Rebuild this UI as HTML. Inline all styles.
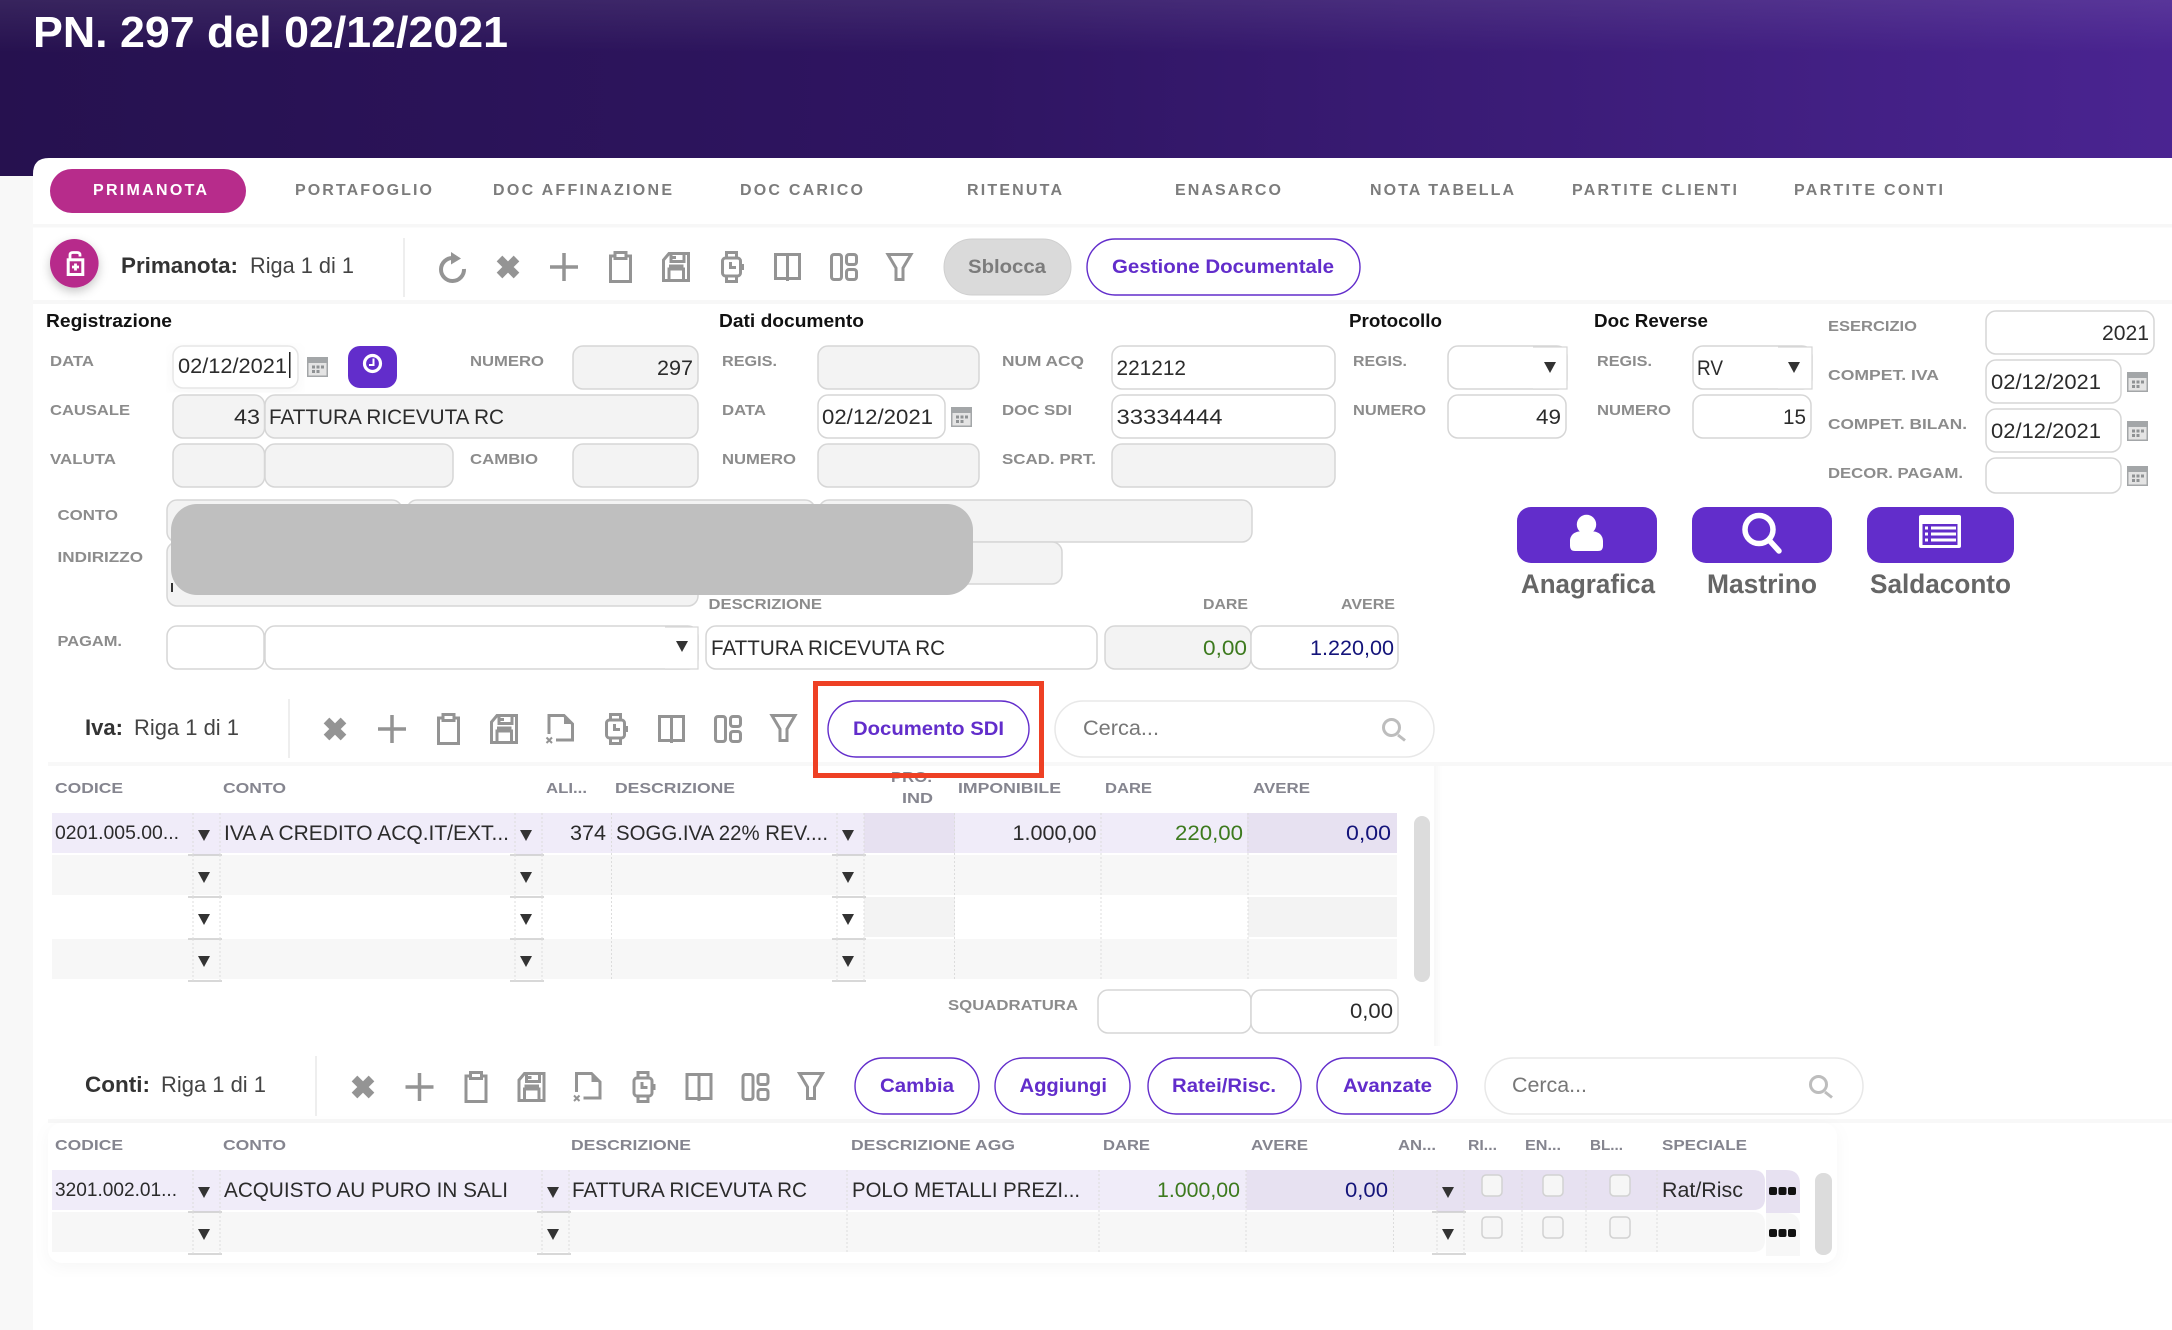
<!DOCTYPE html>
<html><head><meta charset="utf-8"><title>PN. 297 del 02/12/2021</title>
<style>
html,body{margin:0;padding:0;background:#fff;width:2172px;height:1330px;overflow:hidden}
svg{display:block;font-family:"Liberation Sans",Arial,sans-serif}
.t{font-size:16px;font-weight:bold;fill:#7c7c7c}
.l{font-size:15px;font-weight:bold;fill:#8c8c8c}
.h{font-size:15px;font-weight:bold;fill:#85858f}
.v{font-size:21px;fill:#2b2b2b}
.s{font-size:19px;fill:#2b2b2b}
.b{font-size:18px;font-weight:bold;fill:#111}
.p{font-size:19px;font-weight:bold;fill:#622dcb}
.n{font-size:22px;fill:#444}
.m{font-size:22px;font-weight:bold;fill:#333}
.c{font-size:21px;fill:#777}
.a{font-size:27px;font-weight:bold;fill:#666}
.g{fill:#3d7a1e}.y{fill:#14147a}
.d{fill:#f3f3f3;stroke:#d6d6d6;stroke-width:1.5}
.w{fill:#fff;stroke:#d6d6d6;stroke-width:1.5}
.o{fill:#fff;stroke:#622dcb;stroke-width:1.4}
.q{fill:#fff;stroke:#e8e8e8;stroke-width:1.5}
.i{fill:none;stroke:#949494;stroke-width:3}
.z{stroke:#dcdcdc;stroke-width:1;stroke-dasharray:2 2;fill:none}
</style></head><body>
<svg width="2172" height="1330" viewBox="0 0 2172 1330" xmlns="http://www.w3.org/2000/svg">
<defs>
<linearGradient id="hd" x1="0" x2="1" y1="0" y2="0"><stop offset="0" stop-color="#26114f"/><stop offset=".45" stop-color="#2f1562"/><stop offset="1" stop-color="#4a2491"/></linearGradient>
<linearGradient id="ht" x1="0" x2="0" y1="0" y2="1"><stop offset="0" stop-color="#fff" stop-opacity=".08"/><stop offset=".3" stop-color="#fff" stop-opacity="0"/></linearGradient>
<linearGradient id="ss" x1="0" x2="1" y1="0" y2="0"><stop offset="0" stop-color="#f7f7f7"/><stop offset="1" stop-color="#fff"/></linearGradient>
<filter id="sh" x="-40%" y="-40%" width="180%" height="180%"><feDropShadow dx="0" dy="4" stdDeviation="5" flood-color="#000" flood-opacity=".22"/></filter>
<filter id="cs" x="-5%" y="-5%" width="110%" height="115%"><feDropShadow dx="0" dy="4" stdDeviation="8" flood-color="#000" flood-opacity=".035"/></filter>
<g id="ix"><path d="M3.500 3.500L20.500 20.500M20.500 3.500L3.500 20.500" fill="none" stroke="#949494" stroke-width="8"/></g>
<g id="ipl"><path d="M0 14H28M14 0V28" fill="none" stroke="#949494" stroke-width="3.500"/></g>
<g id="icl"><path class="i" d="M6 5H1.500V30.500H21.500V5H17"/><rect class="i" x="6" y="1.500" width="11" height="6"/></g>
<g id="ifl"><path class="i" d="M7 1.500H26.500V28.500H1.500V8Z"/><path class="i" d="M7 28V17H21.500V28"/><path class="i" d="M7 14H21.500"/><path class="i" d="M9 1.500V9.500H22V1.500" stroke-width="2.500"/><rect x="10" y="4" width="4" height="3" fill="#949494"/></g>
<g id="iwa"><rect class="i" x="1.500" y="7" width="18" height="18" rx="3"/><path class="i" d="M5.500 7V1.500H15.500V7M5.500 25V30.500H15.500V25"/><rect x="20" y="13" width="3" height="6" fill="#949494"/><path class="i" d="M9.500 11V16.500H15"/></g>
<g id="ibo"><rect class="i" x="1.500" y="1.500" width="24" height="24"/><path class="i" d="M13.500 1.500V28"/></g>
<g id="ida"><rect class="i" x="1.500" y="1.500" width="10" height="25" rx="2.500"/><rect class="i" x="16.500" y="1.500" width="10" height="10" rx="2.500"/><rect class="i" x="16.500" y="16.500" width="10" height="10" rx="2.500"/></g>
<g id="ifi"><path class="i" d="M2 1.500H25L17 15V26.500H10V15Z"/></g>
<g id="idx"><path class="i" d="M3 20V1.500H18L26.500 10V26H10"/><path d="M18 1.500V10H26.500Z" fill="#949494"/><path d="M0.500 23.500L6 29M6 23.500L0.500 29" fill="none" stroke="#949494" stroke-width="2"/></g>
<g id="cal"><rect width="21" height="20" fill="#a3a6a8"/><rect x="1.500" y="6" width="18" height="12.500" fill="#e4e4e4"/><path d="M5 8.500h3v3h-3zM9.500 8.500h3v3h-3zM14 8.500h3v3h-3zM5 13h3v3h-3zM9.500 13h3v3h-3z" fill="#8f9294"/></g>
<g id="se"><path d="M-6 17H6L0 28Z" fill="#333"/><path d="M-16 42H18" stroke="#ccc" stroke-width="1.500"/><path class="z" d="M-11 0V42M16 0V42"/></g>
<g id="sr"><circle cx="9.500" cy="9.500" r="8" fill="none" stroke="#bdbdbd" stroke-width="3"/><path d="M16 17L23 22.500" stroke="#bdbdbd" stroke-width="3" fill="none"/></g>
<g id="cb"><rect x="0" y="0" width="20" height="21" rx="4" fill="#f6f6f6" stroke="#d2d2d2" stroke-width="1.500"/></g>
<g id="dots"><rect width="8" height="8" rx="2" fill="#111"/><rect x="9.500" width="8" height="8" rx="2" fill="#111"/><rect x="19" width="8" height="8" rx="2" fill="#111"/></g>
</defs>

<rect width="2172" height="1330" fill="#fff"/>
<rect y="176" width="33" height="1154" fill="#f8f8f8"/>
<rect width="2172" height="176" fill="url(#hd)"/>
<rect width="2172" height="176" fill="url(#ht)"/>
<path d="M33 174Q33 158 49 158H2172V1330H33Z" fill="#fff"/>
<text x="33" y="47" font-size="44" font-weight="bold" fill="#fff" textLength="475" lengthAdjust="spacingAndGlyphs">PN. 297 del 02/12/2021</text>

<!-- tabs -->
<rect x="50" y="169" width="196" height="44" rx="22" fill="#b72c8b"/>
<text x="93" y="195" class="t" style="fill:#fff" textLength="114">PRIMANOTA</text>
<text x="295" y="195" class="t" textLength="137">PORTAFOGLIO</text>
<text x="493" y="195" class="t" textLength="179">DOC AFFINAZIONE</text>
<text x="740" y="195" class="t" textLength="123">DOC CARICO</text>
<text x="967" y="195" class="t" textLength="95">RITENUTA</text>
<text x="1175" y="195" class="t" textLength="106">ENASARCO</text>
<text x="1370" y="195" class="t" textLength="144">NOTA TABELLA</text>
<text x="1572" y="195" class="t" textLength="165">PARTITE CLIENTI</text>
<text x="1794" y="195" class="t" textLength="149">PARTITE CONTI</text>
<rect x="33" y="224" width="2139" height="3.500" fill="#f7f7f7"/>
<rect x="33" y="300" width="2139" height="4" fill="#f7f7f7"/>

<!-- primanota toolbar -->
<circle cx="74.300" cy="263.300" r="24.300" fill="#b72c8b" filter="url(#sh)"/>
<rect x="68.200" y="259.800" width="14.600" height="14.700" fill="none" stroke="#fff" stroke-width="3"/>
<path d="M70 259V255Q70 252.500 73 252.500H77Q80 252.500 80 255V256.500" fill="none" stroke="#fff" stroke-width="2.800"/>
<path d="M75.500 263.500V270.500M72 267H79" stroke="#fff" stroke-width="2.800"/>
<text x="121" y="273" class="m" textLength="117" lengthAdjust="spacingAndGlyphs">Primanota:</text>
<text x="250" y="273" class="n" textLength="104" lengthAdjust="spacingAndGlyphs">Riga 1 di 1</text>
<rect x="403" y="238" width="2" height="59" fill="#eeeeee"/>
<g transform="translate(439,252)"><path d="M14 6A11.500 11.500 0 1 0 25 17" fill="none" stroke="#949494" stroke-width="4"/><path d="M12 0L22 6.500L12 12.500Z" fill="#949494"/></g>
<use href="#ix" x="496" y="255"/>
<use href="#ipl" x="550" y="253"/>
<use href="#icl" x="609" y="251"/>
<use href="#ifl" x="662" y="252"/>
<use href="#iwa" x="721" y="251"/>
<use href="#ibo" x="774" y="253"/>
<use href="#ida" x="830" y="253"/>
<use href="#ifi" x="886" y="253"/>
<rect x="944" y="239" width="127" height="56" rx="28" fill="#dadada" stroke="#cfcfcf"/>
<text x="968" y="273" font-size="19" font-weight="bold" fill="#7c7c7c" textLength="78" lengthAdjust="spacingAndGlyphs">Sblocca</text>
<rect class="o" x="1087" y="239" width="273" height="56" rx="28"/>
<text class="p" x="1112" y="273" textLength="222" lengthAdjust="spacingAndGlyphs">Gestione Documentale</text>

<!-- section titles -->
<text class="b" x="46" y="327" textLength="126" lengthAdjust="spacingAndGlyphs">Registrazione</text>
<text class="b" x="719" y="327" textLength="145" lengthAdjust="spacingAndGlyphs">Dati documento</text>
<text class="b" x="1349" y="327" textLength="93" lengthAdjust="spacingAndGlyphs">Protocollo</text>
<text class="b" x="1594" y="327" textLength="114" lengthAdjust="spacingAndGlyphs">Doc Reverse</text>

<!-- row 1 -->
<text class="l" x="50" y="366" textLength="44" lengthAdjust="spacingAndGlyphs">DATA</text>
<rect x="173" y="346" width="125" height="42" rx="10" fill="#fff" stroke="#e6e6e6" stroke-width="1.500" filter="url(#cs)"/>
<text class="v" x="178" y="373" textLength="109" lengthAdjust="spacingAndGlyphs">02/12/2021</text>
<rect x="289" y="352" width="1.500" height="26" fill="#222"/>
<use href="#cal" x="307" y="357"/>
<rect x="348" y="346" width="49" height="42" rx="12" fill="#622dcb"/>
<circle cx="372.500" cy="363.500" r="8" fill="none" stroke="#fff" stroke-width="3.200"/>
<path d="M373.500 358.500V365H369" fill="none" stroke="#fff" stroke-width="2"/>
<text class="l" x="470" y="366" textLength="74" lengthAdjust="spacingAndGlyphs">NUMERO</text>
<rect class="d" x="573" y="346" width="125" height="43" rx="10"/>
<text class="v" x="657" y="375" textLength="36" lengthAdjust="spacingAndGlyphs">297</text>
<text class="l" x="722" y="366" textLength="55" lengthAdjust="spacingAndGlyphs">REGIS.</text>
<rect class="d" x="818" y="346" width="161" height="43" rx="10"/>
<text class="l" x="1002" y="366" textLength="82" lengthAdjust="spacingAndGlyphs">NUM ACQ</text>
<rect class="w" x="1112" y="346" width="223" height="43" rx="10"/>
<text class="v" x="1116.500" y="375" textLength="69.500" lengthAdjust="spacingAndGlyphs">221212</text>
<text class="l" x="1353" y="366" textLength="54" lengthAdjust="spacingAndGlyphs">REGIS.</text>
<rect class="w" x="1448" y="346" width="119" height="43" rx="10"/>
<path d="M1533 347H1567V389H1533" fill="#fff" stroke="#d6d6d6" stroke-width="1.200"/>
<path d="M1544 362H1556L1550 373Z" fill="#333"/>
<text class="l" x="1597" y="366" textLength="55" lengthAdjust="spacingAndGlyphs">REGIS.</text>
<rect class="w" x="1693" y="346" width="119" height="43" rx="10"/>
<path d="M1778 347H1812V389H1778" fill="#fff" stroke="#d6d6d6" stroke-width="1.200"/>
<path d="M1788 362H1800L1794 373Z" fill="#333"/>
<text class="v" x="1697" y="375" textLength="26" lengthAdjust="spacingAndGlyphs">RV</text>

<!-- right col -->
<text class="l" x="1828" y="331" textLength="89" lengthAdjust="spacingAndGlyphs">ESERCIZIO</text>
<rect class="w" x="1986" y="311" width="168" height="43" rx="10"/>
<text class="v" x="2102" y="340" textLength="47" lengthAdjust="spacingAndGlyphs">2021</text>
<text class="l" x="1828" y="380" textLength="111" lengthAdjust="spacingAndGlyphs">COMPET. IVA</text>
<rect class="w" x="1986" y="360" width="135" height="43" rx="10"/>
<text class="v" x="1991" y="389" textLength="110" lengthAdjust="spacingAndGlyphs">02/12/2021</text>
<use href="#cal" x="2127" y="372"/>
<text class="l" x="1828" y="429" textLength="139" lengthAdjust="spacingAndGlyphs">COMPET. BILAN.</text>
<rect class="w" x="1986" y="409" width="135" height="43" rx="10"/>
<text class="v" x="1991" y="438" textLength="110" lengthAdjust="spacingAndGlyphs">02/12/2021</text>
<use href="#cal" x="2127" y="421"/>
<text class="l" x="1828" y="478" textLength="135" lengthAdjust="spacingAndGlyphs">DECOR. PAGAM.</text>
<rect class="w" x="1986" y="458" width="135" height="35" rx="10"/>
<use href="#cal" x="2127" y="466"/>

<!-- row 2 -->
<text class="l" x="50" y="415" textLength="80" lengthAdjust="spacingAndGlyphs">CAUSALE</text>
<rect class="d" x="173" y="395" width="91.500" height="43" rx="10"/>
<text class="v" x="234" y="424" textLength="26" lengthAdjust="spacingAndGlyphs">43</text>
<rect class="d" x="265" y="395" width="433" height="43" rx="10"/>
<text class="v" x="269" y="424" textLength="235" lengthAdjust="spacingAndGlyphs">FATTURA RICEVUTA RC</text>
<text class="l" x="722" y="415" textLength="44" lengthAdjust="spacingAndGlyphs">DATA</text>
<rect class="w" x="818" y="395" width="127" height="43" rx="10"/>
<text class="v" x="822" y="424" textLength="111" lengthAdjust="spacingAndGlyphs">02/12/2021</text>
<use href="#cal" x="951" y="407"/>
<text class="l" x="1002" y="415" textLength="70" lengthAdjust="spacingAndGlyphs">DOC SDI</text>
<rect class="w" x="1112" y="395" width="223" height="43" rx="10"/>
<text class="v" x="1116.500" y="424" textLength="106" lengthAdjust="spacingAndGlyphs">33334444</text>
<text class="l" x="1353" y="415" textLength="73" lengthAdjust="spacingAndGlyphs">NUMERO</text>
<rect class="w" x="1448" y="395" width="118" height="43" rx="10"/>
<text class="v" x="1536" y="424" textLength="25" lengthAdjust="spacingAndGlyphs">49</text>
<text class="l" x="1597" y="415" textLength="74" lengthAdjust="spacingAndGlyphs">NUMERO</text>
<rect class="w" x="1693" y="395" width="118" height="43" rx="10"/>
<text class="v" x="1783" y="424" textLength="23" lengthAdjust="spacingAndGlyphs">15</text>

<!-- row 3 -->
<text class="l" x="50" y="464" textLength="66" lengthAdjust="spacingAndGlyphs">VALUTA</text>
<rect class="d" x="173" y="444" width="91.500" height="43" rx="10"/>
<rect class="d" x="265" y="444" width="188" height="43" rx="10"/>
<text class="l" x="470" y="464" textLength="68" lengthAdjust="spacingAndGlyphs">CAMBIO</text>
<rect class="d" x="573" y="444" width="125" height="43" rx="10"/>
<text class="l" x="722" y="464" textLength="74" lengthAdjust="spacingAndGlyphs">NUMERO</text>
<rect class="d" x="818" y="444" width="161" height="43" rx="10"/>
<text class="l" x="1002" y="464" textLength="94" lengthAdjust="spacingAndGlyphs">SCAD. PRT.</text>
<rect class="d" x="1112" y="444" width="223" height="43" rx="10"/>

<!-- conto / indirizzo -->
<text class="l" x="57.500" y="520" textLength="60.500" lengthAdjust="spacingAndGlyphs">CONTO</text>
<text class="l" x="57.500" y="562" textLength="85.500" lengthAdjust="spacingAndGlyphs">INDIRIZZO</text>
<rect class="d" x="167" y="500" width="235" height="42" rx="10"/>
<rect class="d" x="407" y="500" width="408" height="42" rx="10"/>
<rect class="d" x="819" y="500" width="433" height="42" rx="10"/>
<rect class="d" x="167" y="542" width="531" height="64" rx="10"/>
<rect class="d" x="800" y="542" width="262" height="42" rx="10"/>
<path d="M172 583V592" stroke="#333" stroke-width="2"/>
<rect x="171" y="504" width="802" height="91" rx="26" fill="#bfbfbf"/>
<text class="l" x="708.500" y="609" textLength="113.500" lengthAdjust="spacingAndGlyphs">DESCRIZIONE</text>
<text class="l" x="1203" y="609" textLength="45" lengthAdjust="spacingAndGlyphs">DARE</text>
<text class="l" x="1341" y="609" textLength="54" lengthAdjust="spacingAndGlyphs">AVERE</text>
<text class="l" x="57.500" y="646" textLength="64.500" lengthAdjust="spacingAndGlyphs">PAGAM.</text>
<rect class="w" x="167" y="626" width="97" height="43" rx="10"/>
<rect class="w" x="265" y="626" width="433" height="43" rx="10"/>
<path d="M665 627H698V669H665" fill="#fff" stroke="#d6d6d6" stroke-width="1.200"/>
<path d="M676 641H688L682 652Z" fill="#333"/>
<rect class="w" x="706" y="626" width="391" height="43" rx="10"/>
<text class="v" x="711" y="655" textLength="234" lengthAdjust="spacingAndGlyphs">FATTURA RICEVUTA RC</text>
<rect class="d" x="1105" y="626" width="146" height="43" rx="10"/>
<text class="v g" x="1203" y="655" textLength="44" lengthAdjust="spacingAndGlyphs">0,00</text>
<rect class="w" x="1251" y="626" width="147" height="43" rx="10"/>
<text class="v y" x="1310" y="655" textLength="84" lengthAdjust="spacingAndGlyphs">1.220,00</text>

<!-- action buttons -->
<rect x="1517" y="507" width="140" height="56" rx="14" fill="#622dcb"/>
<rect x="1692" y="507" width="140" height="56" rx="14" fill="#622dcb"/>
<rect x="1867" y="507" width="147" height="56" rx="14" fill="#622dcb"/>
<circle cx="1586.500" cy="524.500" r="9.700" fill="#fff"/>
<path d="M1570 546V541C1570 535 1575 531 1581 531.500C1584 534.500 1589 534.500 1592 531.500C1598 531 1603 535 1603 541V546Q1603 551 1598 551H1575Q1570 551 1570 546Z" fill="#fff"/>
<circle cx="1759" cy="529.500" r="14" fill="none" stroke="#fff" stroke-width="5.500"/>
<path d="M1769 540L1779 551" stroke="#fff" stroke-width="5.500" stroke-linecap="round"/>
<rect x="1919" y="515" width="42" height="33" rx="2" fill="#fff"/>
<rect x="1922.500" y="524" width="35" height="21" fill="#622dcb"/>
<path d="M1925 526.500h3v3h-3zM1931 526.500h25v3h-25zM1925 532.500h3v3h-3zM1931 532.500h25v3h-25zM1925 538.500h3v3h-3zM1931 538.500h25v3h-25z" fill="#fff"/>
<text class="a" x="1521" y="593" textLength="134" lengthAdjust="spacingAndGlyphs">Anagrafica</text>
<text class="a" x="1707" y="593" textLength="110" lengthAdjust="spacingAndGlyphs">Mastrino</text>
<text class="a" x="1870" y="593" textLength="141" lengthAdjust="spacingAndGlyphs">Saldaconto</text>

<!-- IVA toolbar -->
<text class="m" x="85" y="735" textLength="38" lengthAdjust="spacingAndGlyphs">Iva:</text>
<text class="n" x="134" y="735" textLength="105" lengthAdjust="spacingAndGlyphs">Riga 1 di 1</text>
<rect x="288" y="699" width="2" height="59" fill="#eeeeee"/>
<use href="#ix" x="323" y="717"/>
<use href="#ipl" x="378" y="715"/>
<use href="#icl" x="437" y="713"/>
<use href="#ifl" x="490" y="714"/>
<use href="#idx" x="546" y="714"/>
<use href="#iwa" x="605" y="713"/>
<use href="#ibo" x="658" y="715"/>
<use href="#ida" x="714" y="715"/>
<use href="#ifi" x="770" y="714"/>
<rect class="o" x="828" y="701" width="201" height="56" rx="28"/>
<text class="p" x="853" y="735" textLength="151" lengthAdjust="spacingAndGlyphs">Documento SDI</text>
<rect class="q" x="1055" y="701" width="379" height="56" rx="28"/>
<text class="c" x="1083" y="735" textLength="76" lengthAdjust="spacingAndGlyphs">Cerca...</text>
<use href="#sr" x="1382" y="718"/>
<rect x="48" y="762" width="2124" height="4" fill="#f8f8f8"/>

<!-- IVA table -->
<rect x="1434" y="766" width="8" height="280" fill="url(#ss)"/>
<text class="h" x="55" y="793" textLength="68" lengthAdjust="spacingAndGlyphs">CODICE</text>
<text class="h" x="223" y="793" textLength="63" lengthAdjust="spacingAndGlyphs">CONTO</text>
<text class="h" x="546" y="793" textLength="41" lengthAdjust="spacingAndGlyphs">ALI...</text>
<text class="h" x="615" y="793" textLength="120" lengthAdjust="spacingAndGlyphs">DESCRIZIONE</text>
<text class="h" x="891" y="782" textLength="41" lengthAdjust="spacingAndGlyphs">PRO.</text>
<text class="h" x="902" y="803" textLength="31" lengthAdjust="spacingAndGlyphs">IND</text>
<text class="h" x="958" y="793" textLength="103" lengthAdjust="spacingAndGlyphs">IMPONIBILE</text>
<text class="h" x="1105" y="793" textLength="47" lengthAdjust="spacingAndGlyphs">DARE</text>
<text class="h" x="1253" y="793" textLength="57" lengthAdjust="spacingAndGlyphs">AVERE</text>
<rect x="52" y="813" width="1345" height="40" fill="#f0ecf9"/>
<rect x="864" y="813" width="91" height="40" fill="#e7e1f1"/>
<rect x="1247" y="813" width="150" height="40" fill="#e7e1f1"/>
<rect x="52" y="855" width="1345" height="40" fill="#f7f7f7"/>
<rect x="864" y="897" width="91" height="40" fill="#f3f3f3"/>
<rect x="1248" y="897" width="149" height="40" fill="#f3f3f3"/>
<rect x="52" y="939" width="1345" height="40" fill="#f7f7f7"/>
<path class="z" d="M611.500 813V979M954.500 813V979M1101 813V979M1248 813V979"/>
<rect x="193" y="813" width="27" height="42" fill="#f0ecf9"/><rect x="516" y="813" width="27" height="42" fill="#f0ecf9"/><rect x="837" y="813" width="27" height="42" fill="#f0ecf9"/>
<use href="#se" x="204" y="813"/><use href="#se" x="526" y="813"/><use href="#se" x="848" y="813"/>
<use href="#se" x="204" y="855"/><use href="#se" x="526" y="855"/><use href="#se" x="848" y="855"/>
<use href="#se" x="204" y="897"/><use href="#se" x="526" y="897"/><use href="#se" x="848" y="897"/>
<use href="#se" x="204" y="939"/><use href="#se" x="526" y="939"/><use href="#se" x="848" y="939"/>
<text class="s" x="55" y="839" textLength="124" lengthAdjust="spacingAndGlyphs">0201.005.00...</text>
<text class="v" x="224" y="840" textLength="285" lengthAdjust="spacingAndGlyphs">IVA A CREDITO ACQ.IT/EXT...</text>
<text class="v" x="570" y="840" textLength="36" lengthAdjust="spacingAndGlyphs">374</text>
<text class="v" x="616" y="840" textLength="212" lengthAdjust="spacingAndGlyphs">SOGG.IVA 22% REV....</text>
<text class="v" x="1012.500" y="840" textLength="84" lengthAdjust="spacingAndGlyphs">1.000,00</text>
<text class="v g" x="1175" y="840" textLength="68" lengthAdjust="spacingAndGlyphs">220,00</text>
<text class="v y" x="1346" y="840" textLength="45" lengthAdjust="spacingAndGlyphs">0,00</text>
<rect x="1414" y="816" width="16" height="166" rx="8" fill="#dcdcdc"/>
<text class="l" x="948" y="1010" textLength="130" lengthAdjust="spacingAndGlyphs">SQUADRATURA</text>
<rect class="w" x="1098" y="990" width="153" height="43" rx="10"/>
<rect class="w" x="1251" y="990" width="147" height="43" rx="10"/>
<text class="v" x="1350" y="1018" textLength="43" lengthAdjust="spacingAndGlyphs">0,00</text>

<!-- CONTI toolbar -->
<text class="m" x="85" y="1092" textLength="65" lengthAdjust="spacingAndGlyphs">Conti:</text>
<text class="n" x="161" y="1092" textLength="105" lengthAdjust="spacingAndGlyphs">Riga 1 di 1</text>
<rect x="315" y="1056" width="2" height="60" fill="#eeeeee"/>
<use href="#ix" x="351" y="1075"/>
<use href="#ipl" x="405.500" y="1073"/>
<use href="#icl" x="464.500" y="1071"/>
<use href="#ifl" x="517.500" y="1072"/>
<use href="#idx" x="573.500" y="1072"/>
<use href="#iwa" x="632.500" y="1071"/>
<use href="#ibo" x="685.500" y="1073"/>
<use href="#ida" x="741.500" y="1073"/>
<use href="#ifi" x="797.500" y="1072"/>
<rect class="o" x="855" y="1058" width="124" height="56" rx="28"/>
<text class="p" x="880" y="1092" textLength="74" lengthAdjust="spacingAndGlyphs">Cambia</text>
<rect class="o" x="995" y="1058" width="135" height="56" rx="28"/>
<text class="p" x="1019.500" y="1092" textLength="87.500" lengthAdjust="spacingAndGlyphs">Aggiungi</text>
<rect class="o" x="1148" y="1058" width="153" height="56" rx="28"/>
<text class="p" x="1172" y="1092" textLength="104" lengthAdjust="spacingAndGlyphs">Ratei/Risc.</text>
<rect class="o" x="1317" y="1058" width="140" height="56" rx="28"/>
<text class="p" x="1343" y="1092" textLength="89" lengthAdjust="spacingAndGlyphs">Avanzate</text>
<rect class="q" x="1485" y="1058" width="378" height="56" rx="28"/>
<text class="c" x="1512" y="1092" textLength="75" lengthAdjust="spacingAndGlyphs">Cerca...</text>
<use href="#sr" x="1809" y="1075"/>
<rect x="48" y="1119" width="2124" height="4" fill="#f8f8f8"/>

<!-- CONTI table -->
<rect x="48" y="1123" width="1789" height="140" rx="14" fill="#fff" filter="url(#cs)"/>
<text class="h" x="55" y="1150" textLength="68" lengthAdjust="spacingAndGlyphs">CODICE</text>
<text class="h" x="223" y="1150" textLength="63" lengthAdjust="spacingAndGlyphs">CONTO</text>
<text class="h" x="571" y="1150" textLength="120" lengthAdjust="spacingAndGlyphs">DESCRIZIONE</text>
<text class="h" x="851" y="1150" textLength="164" lengthAdjust="spacingAndGlyphs">DESCRIZIONE AGG</text>
<text class="h" x="1103" y="1150" textLength="47" lengthAdjust="spacingAndGlyphs">DARE</text>
<text class="h" x="1251" y="1150" textLength="57" lengthAdjust="spacingAndGlyphs">AVERE</text>
<text class="h" x="1398" y="1150" textLength="38" lengthAdjust="spacingAndGlyphs">AN...</text>
<text class="h" x="1468" y="1150" textLength="29" lengthAdjust="spacingAndGlyphs">RI...</text>
<text class="h" x="1525" y="1150" textLength="36" lengthAdjust="spacingAndGlyphs">EN...</text>
<text class="h" x="1590" y="1150" textLength="33" lengthAdjust="spacingAndGlyphs">BL...</text>
<text class="h" x="1662" y="1150" textLength="85" lengthAdjust="spacingAndGlyphs">SPECIALE</text>
<path d="M52 1170H1753Q1765 1170 1765 1182V1198Q1765 1210 1753 1210H52Z" fill="#f0ecf9"/>
<path d="M1246.500 1170H1753Q1765 1170 1765 1182V1198Q1765 1210 1753 1210H1246.500Z" fill="#e7e1f1"/>
<path d="M52 1212H1753Q1765 1212 1765 1224V1240Q1765 1252 1753 1252H52Z" fill="#f7f7f7"/>
<path d="M1766 1170H1786Q1800 1170 1800 1184V1213H1766Z" fill="#e7e1f1"/>
<path d="M1766 1213H1786Q1800 1213 1800 1227V1256H1766Z" fill="#f7f7f7"/>
<use href="#dots" x="1769" y="1187"/><use href="#dots" x="1769" y="1229"/>
<path class="z" d="M847 1170V1252M1099 1170V1252M1246 1170V1252M1393.500 1170V1252M1522 1170V1252M1586 1170V1252M1657 1170V1252"/>
<rect x="193" y="1170" width="27" height="42" fill="#f0ecf9"/><rect x="542" y="1170" width="27" height="42" fill="#f0ecf9"/><rect x="1437" y="1170" width="27" height="42" fill="#e7e1f1"/>
<use href="#se" x="204" y="1170"/><use href="#se" x="553" y="1170"/><use href="#se" x="1448" y="1170"/>
<use href="#se" x="204" y="1212"/><use href="#se" x="553" y="1212"/><use href="#se" x="1448" y="1212"/>
<use href="#cb" x="1482" y="1175"/><use href="#cb" x="1543" y="1175"/><use href="#cb" x="1610" y="1175"/>
<use href="#cb" x="1482" y="1217"/><use href="#cb" x="1543" y="1217"/><use href="#cb" x="1610" y="1217"/>
<text class="s" x="55" y="1196" textLength="122" lengthAdjust="spacingAndGlyphs">3201.002.01...</text>
<text class="v" x="224" y="1197" textLength="284" lengthAdjust="spacingAndGlyphs">ACQUISTO AU PURO IN SALI</text>
<text class="v" x="572" y="1197" textLength="235" lengthAdjust="spacingAndGlyphs">FATTURA RICEVUTA RC</text>
<text class="v" x="852" y="1197" textLength="228" lengthAdjust="spacingAndGlyphs">POLO METALLI PREZI...</text>
<text class="v g" x="1157" y="1197" textLength="83" lengthAdjust="spacingAndGlyphs">1.000,00</text>
<text class="v y" x="1345" y="1197" textLength="43" lengthAdjust="spacingAndGlyphs">0,00</text>
<text class="v" x="1662" y="1197" textLength="81" lengthAdjust="spacingAndGlyphs">Rat/Risc</text>
<rect x="1815" y="1173" width="17" height="82" rx="8" fill="#dcdcdc"/>

<!-- red annotation box -->
<rect x="815.500" y="683.500" width="226" height="92" fill="none" stroke="#ee4024" stroke-width="5"/>
</svg>
</body></html>
